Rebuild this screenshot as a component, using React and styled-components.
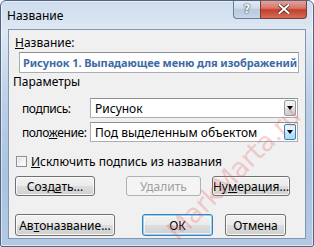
import React from "react";
import styled, { createGlobalStyle, css } from "styled-components";

const GlobalStyle = createGlobalStyle`
  html, body {
    margin: 0;
    padding: 0;
    background: #ffffff;
  }
  body {
    font-family: "Segoe UI", "Noto Sans", "Liberation Sans", sans-serif;
    font-size: 12px;
    color: #000;
  }
`;

const Window = styled.div`
  position: relative;
  width: 314px;
  height: 247px;
  box-sizing: border-box;
  border: 1px solid #4f6582;
  border-radius: 6px 6px 2px 2px;
  background: linear-gradient(
    180deg,
    #cddcee 0%,
    #dfe8f3 12%,
    #bcd0e7 40%,
    #abc3e0 70%,
    #b3c9e3 100%
  );
  box-shadow: inset 0 0 0 1px rgba(255, 255, 255, 0.55);
  display: flex;
  flex-direction: column;
  overflow: hidden;
`;

const TitleBar = styled.div`
  height: 28px;
  display: flex;
  align-items: flex-start;
  justify-content: space-between;
  flex-shrink: 0;
`;

const Title = styled.div`
  padding: 8px 0 0 6px;
  font-size: 12px;
  line-height: 14px;
  color: #000;
`;

const Controls = styled.div`
  display: flex;
  margin-right: 6px;
  margin-top: -1px;
`;

const CaptionButton = styled.div`
  height: 19px;
  box-sizing: border-box;
  display: flex;
  align-items: center;
  justify-content: center;
  border: 1px solid #6b7e99;
  border-top: none;
  ${(p) =>
    p.$close
      ? css`
          width: 47px;
          border-radius: 0 0 4px 0;
          border-color: #7a3b3b;
          background: linear-gradient(
            180deg,
            #e8a69b 0%,
            #d9766b 45%,
            #c2402f 55%,
            #d66d55 100%
          );
        `
      : css`
          width: 27px;
          border-radius: 0 0 0 4px;
          border-right: none;
          background: linear-gradient(
            180deg,
            #e4ecf5 0%,
            #d1dcea 45%,
            #b9c8dc 55%,
            #c8d6e8 100%
          );
        `}
`;

const HelpMark = styled.span`
  font-family: "DejaVu Sans", sans-serif;
  font-weight: bold;
  font-size: 12px;
  color: #f4f7fb;
  text-shadow: 0 0 2px #3b4c63, 0 0 1px #3b4c63;
`;

const Client = styled.div`
  margin: 0 7px 7px 7px;
  flex: 1;
  background: #f0f0f0;
  border: 1px solid #8296b1;
  display: flex;
  flex-direction: column;
  position: relative;
`;

const Label = styled.div`
  line-height: 14px;
  margin-left: ${(p) => p.$indent || 6}px;
  margin-top: ${(p) => p.$top || 0}px;
  white-space: nowrap;
`;

const U = styled.span`
  text-decoration: underline;
  text-underline-offset: 1px;
`;

const TextField = styled.div`
  margin: 2px 0 0 10px;
  width: 280px;
  height: 21px;
  box-sizing: border-box;
  background: #fff;
  border: 1px solid #abadb3;
  border-top-color: #8e8f8f;
  padding: 0 3px;
  display: flex;
  align-items: center;
  overflow: hidden;
  white-space: nowrap;
  font-weight: bold;
  font-size: 11px;
  letter-spacing: -0.1px;
  color: #3f6aa6;
`;

const Row = styled.div`
  display: flex;
  align-items: center;
  margin-top: ${(p) => p.$top}px;
  padding-left: ${(p) => p.$left || 0}px;
`;

const RowLabel = styled.div`
  width: 68px;
  white-space: nowrap;
  letter-spacing: -0.4px;
`;

const Combo = styled.div`
  width: 208px;
  height: 20px;
  box-sizing: border-box;
  background: #fff;
  border: 1px solid #abadb3;
  border-top-color: #8e8f8f;
  display: flex;
  align-items: stretch;
  padding: 1px;
`;

const ComboText = styled.div`
  flex: 1;
  padding-left: 3px;
  display: flex;
  align-items: center;
  white-space: nowrap;
  overflow: hidden;
`;

const ComboArrow = styled.div`
  width: 12px;
  box-sizing: border-box;
  display: flex;
  align-items: center;
  justify-content: center;
  border: 1px solid ${(p) => (p.$hot ? "#3c7fb1" : "#9a9a9a")};
  background: ${(p) =>
    p.$hot
      ? "linear-gradient(180deg, #eaf6fd 0%, #d9f0fc 45%, #bee6fd 55%, #a7d9f5 100%)"
      : "linear-gradient(180deg, #f2f2f2 0%, #ebebeb 45%, #dddddd 55%, #cfcfcf 100%)"};
  border-radius: 2px;
`;

const Triangle = styled.span`
  width: 0;
  height: 0;
  border-left: 3px solid transparent;
  border-right: 3px solid transparent;
  border-top: 4px solid #000;
`;

const Check = styled.div`
  width: 11px;
  height: 11px;
  box-sizing: border-box;
  border: 1px solid #8f8f8f;
  background: linear-gradient(135deg, #dcdcdc 0%, #f4f4f4 60%, #ffffff 100%);
  box-shadow: inset 0 0 0 1px #f4f4f4;
  margin-right: 4px;
`;

const ButtonRow = styled.div`
  display: flex;
  align-items: center;
  margin-top: ${(p) => p.$top}px;
`;

const Button = styled.div`
  height: ${(p) => p.$h || 20}px;
  width: ${(p) => p.$w}px;
  margin-left: ${(p) => p.$gap}px;
  box-sizing: border-box;
  border-radius: 3px;
  display: flex;
  align-items: center;
  justify-content: center;
  white-space: nowrap;
  border: 1px solid #707070;
  background: linear-gradient(180deg, #f2f2f2 0%, #ebebeb 48%, #dddddd 52%, #cfcfcf 100%);
  box-shadow: inset 0 0 0 1px rgba(255, 255, 255, 0.8);
  ${(p) =>
    p.$disabled &&
    css`
      border-color: #adb2b5;
      background: #f4f4f4;
      color: #a0a0a0;
      box-shadow: none;
    `}
  ${(p) =>
    p.$default &&
    css`
      border-color: #3c7fb1;
      box-shadow: inset 0 0 0 1px #8fd3f8, inset 0 0 0 2px rgba(255, 255, 255, 0.6);
    `}
`;

const Watermark = styled.div`
  position: absolute;
  left: 160px;
  top: 224px;
  font-family: "DejaVu Sans", sans-serif;
  font-size: 27px;
  line-height: 30px;
  letter-spacing: -0.5px;
  color: rgba(228, 100, 100, 0.3);
  transform: rotate(-45deg);
  transform-origin: 0 0;
  white-space: nowrap;
  pointer-events: none;
`;

export default function App() {
  return (
    <>
      <GlobalStyle />
      <Window>
        <TitleBar>
          <Title>Название</Title>
          <Controls>
            <CaptionButton>
              <HelpMark>?</HelpMark>
            </CaptionButton>
            <CaptionButton $close>
              <svg width="12" height="10" viewBox="0 0 12 10">
                <path
                  d="M1.5 1 L10.5 9 M10.5 1 L1.5 9"
                  stroke="#4b2020"
                  strokeWidth="3.4"
                  strokeLinecap="square"
                />
                <path
                  d="M1.5 1 L10.5 9 M10.5 1 L1.5 9"
                  stroke="#ffffff"
                  strokeWidth="2"
                  strokeLinecap="square"
                />
              </svg>
            </CaptionButton>
          </Controls>
        </TitleBar>
        <Client>
          <Label $top={6}>
            <U>Н</U>азвание:
          </Label>
          <TextField>Рисунок 1. Выпадающее меню для изображений</TextField>
          <Label $top={2} $indent={4}>
            Параметры
          </Label>
          <Row $top={9} $left={13}>
            <RowLabel>
              по<U>д</U>пись:
            </RowLabel>
            <Combo>
              <ComboText>Рисунок</ComboText>
              <ComboArrow>
                <Triangle />
              </ComboArrow>
            </Combo>
          </Row>
          <Row $top={4} $left={13}>
            <RowLabel>
              поло<U>ж</U>ение:
            </RowLabel>
            <Combo>
              <ComboText>Под выделенным объектом</ComboText>
              <ComboArrow $hot>
                <Triangle />
              </ComboArrow>
            </Combo>
          </Row>
          <Row $top={11} $left={7}>
            <Check />
            <span>
              <U>И</U>сключить подпись из названия
            </span>
          </Row>
          <ButtonRow $top={6}>
            <Button $w={80} $gap={6}>
              Созд<U>а</U>ть...
            </Button>
            <Button $w={75} $gap={31} $disabled>
              Удалить
            </Button>
            <Button $w={78} $gap={11}>
              Ну<U>м</U>ерация...
            </Button>
          </ButtonRow>
          <ButtonRow $top={18}>
            <Button $w={100} $gap={6} $h={22}>
              Ав<U>т</U>оназвание...
            </Button>
            <Button $w={71} $gap={27} $h={22} $default>
              ОК
            </Button>
            <Button $w={61} $gap={12} $h={22}>
              Отмена
            </Button>
          </ButtonRow>
        </Client>
        <Watermark>MarkMarta.ru</Watermark>
      </Window>
    </>
  );
}
